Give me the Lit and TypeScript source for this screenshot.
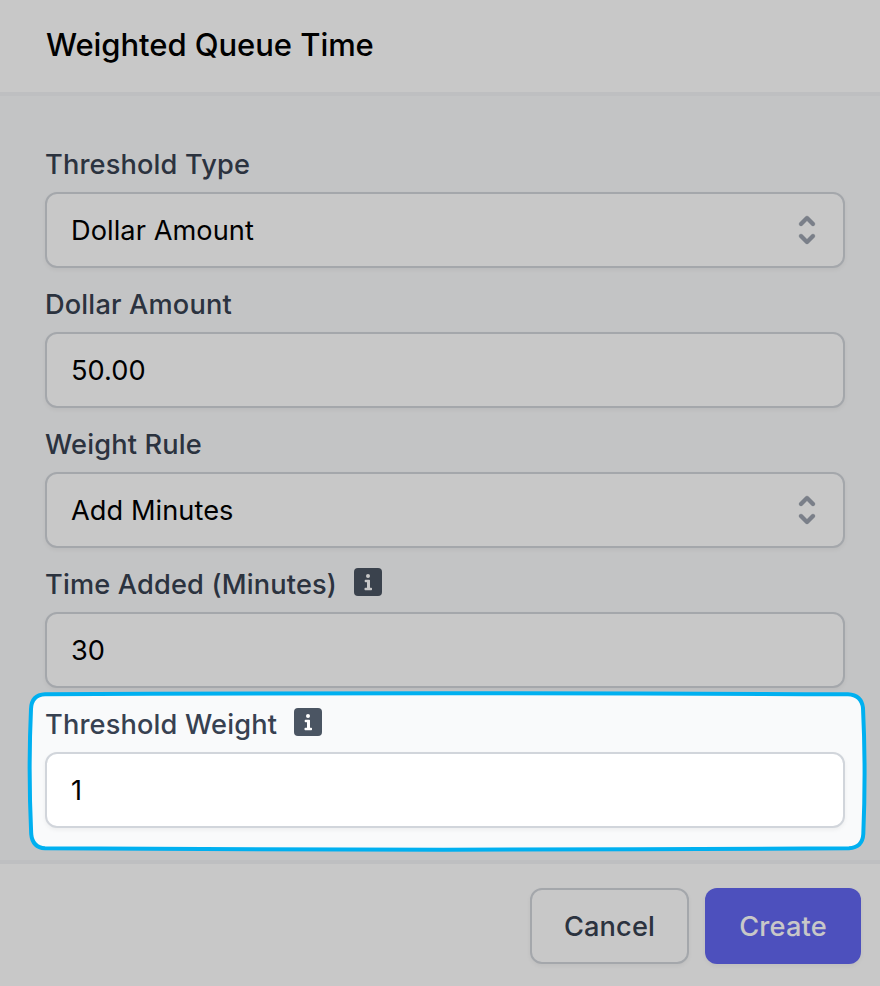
import { LitElement, html, css, svg, nothing } from "lit";
import { customElement, property } from "lit/decorators.js";

const FRAME =
  "M45 694.300 Q440 692.300 848 694.300 Q861.500 695 863 708 Q866 770 863.300 834 Q862.500 847.500 849 848.300 Q440 851 45 848.300 Q32.500 847.500 31.200 834 Q28.200 770 31 709 Q31.500 695 45 694.300 Z";

@customElement("form-field")
class FormField extends LitElement {
  @property() label = "";
  @property() value = "";
  @property({ type: Boolean }) select = false;
  @property({ type: Boolean }) info = false;

  static styles = css`
    :host {
      display: block;
    }
    .label {
      display: flex;
      align-items: flex-start;
      height: 40px;
      margin-bottom: 8px;
      font-size: 27.2px;
      line-height: 41px;
      font-weight: 460;
      letter-spacing: 0.16px;
      color: #374151;
      white-space: nowrap;
    }
    .info {
      display: block;
      width: 28px;
      height: 28px;
      margin: 4px 0 0 17px;
    }
    .control {
      box-sizing: border-box;
      display: flex;
      align-items: flex-start;
      justify-content: space-between;
      height: 76px;
      padding: 0 16px 0 24px;
      border: 2px solid #d1d5db;
      border-radius: 12px;
      background: #fff;
      box-shadow: 0 2px 4px rgba(0, 0, 0, 0.05);
      font-size: 27.2px;
      line-height: 73px;
      letter-spacing: 0.06px;
      color: #000;
    }
    .chevrons {
      width: 40px;
      height: 40px;
      align-self: center;
    }
  `;

  render() {
    return html`
      <div class="label">
        <span>${this.label}</span>
        ${this.info
          ? html`<svg class="info" viewBox="0 0 28 28">
              <rect width="28" height="28" rx="4" fill="#4b5563" />
              <circle cx="14" cy="8" r="2" fill="#fff" />
              <path
                d="M11.500 11.700H15.200Q16 11.700 16 12.500V19.800H17.300Q18 19.800 18 20.500V21.500Q18 22.200 17.300 22.200H11.200Q10.500 22.200 10.500 21.500V20.500Q10.500 19.800 11.200 19.800H13V14.200H11.500Q10.700 14.200 10.700 13.500V12.500Q10.700 11.700 11.500 11.700Z"
                fill="#fff"
              />
            </svg>`
          : nothing}
      </div>
      <div class="control">
        <span>${this.value}</span>
        ${this.select
          ? html`<svg class="chevrons" viewBox="0 0 20 20" fill="#9ca3af" stroke="#9ca3af" stroke-width="0.150">
              <path
                fill-rule="evenodd"
                d="M10 3a1 1 0 01.707.293l3 3a1 1 0 01-1.414 1.414L10 5.414 7.707 7.707a1 1 0 01-1.414-1.414l3-3A1 1 0 0110 3zm-3.707 9.293a1 1 0 011.414 0L10 14.586l2.293-2.293a1 1 0 011.414 1.414l-3 3a1 1 0 01-1.414 0l-3-3a1 1 0 010-1.414z"
              />
            </svg>`
          : nothing}
      </div>
    `;
  }
}

@customElement("app-root")
class AppRoot extends LitElement {
  static styles = css`
    :host {
      position: relative;
      display: flex;
      flex-direction: column;
      width: 880px;
      height: 986px;
      overflow: hidden;
      background: #fff;
      font-family: Inter, "Liberation Sans", sans-serif;
    }
    header {
      box-sizing: border-box;
      height: 96px;
      padding: 22px 46px;
      border-bottom: 4px solid #f3f4f6;
    }
    h1 {
      margin: 0;
      font-size: 31px;
      line-height: 45px;
      font-weight: 480;
      letter-spacing: -0.06px;
      color: #000;
    }
    main {
      box-sizing: border-box;
      display: flex;
      flex-direction: column;
      gap: 16px;
      height: 764px;
      padding: 48px 35px 0 45px;
      background: #f9fafb;
    }
    footer {
      box-sizing: border-box;
      display: flex;
      flex: 1;
      justify-content: flex-end;
      align-items: flex-start;
      gap: 16px;
      padding: 24px 19px 0 0;
      border-top: 4px solid #f3f4f6;
    }
    button {
      box-sizing: border-box;
      height: 76px;
      padding: 1px 0 0;
      border-radius: 12px;
      font: 460 27.2px/41px Inter, "Liberation Sans", sans-serif;
      letter-spacing: 0.16px;
      box-shadow: 0 2px 4px rgba(0, 0, 0, 0.05);
    }
    .cancel {
      width: 159px;
      border: 2px solid #d1d5db;
      background: #fff;
      color: #374151;
    }
    .create {
      width: 156px;
      border: 0;
      background: #6366f1;
      color: #fff;
    }
    .spotlight {
      position: absolute;
      inset: 0;
      pointer-events: none;
    }
  `;

  render() {
    return html`
      <header><h1>Weighted Queue Time</h1></header>
      <main>
        <form-field label="Threshold Type" value="Dollar Amount" select></form-field>
        <form-field label="Dollar Amount" value="50.00"></form-field>
        <form-field label="Weight Rule" value="Add Minutes" select></form-field>
        <form-field label="Time Added (Minutes)" value="30" info></form-field>
        <form-field label="Threshold Weight" value="1" info></form-field>
      </main>
      <footer>
        <button class="cancel">Cancel</button>
        <button class="create">Create</button>
      </footer>
      <svg class="spotlight" width="880" height="986" viewBox="0 0 880 986">
        ${svg`<path d=${"M0 0H880V986H0Z " + FRAME} fill="#000" fill-opacity="0.216" fill-rule="evenodd" />
        <path d=${FRAME} fill="none" stroke="#00b0f0" stroke-width="4" />`}
      </svg>
    `;
  }
}
